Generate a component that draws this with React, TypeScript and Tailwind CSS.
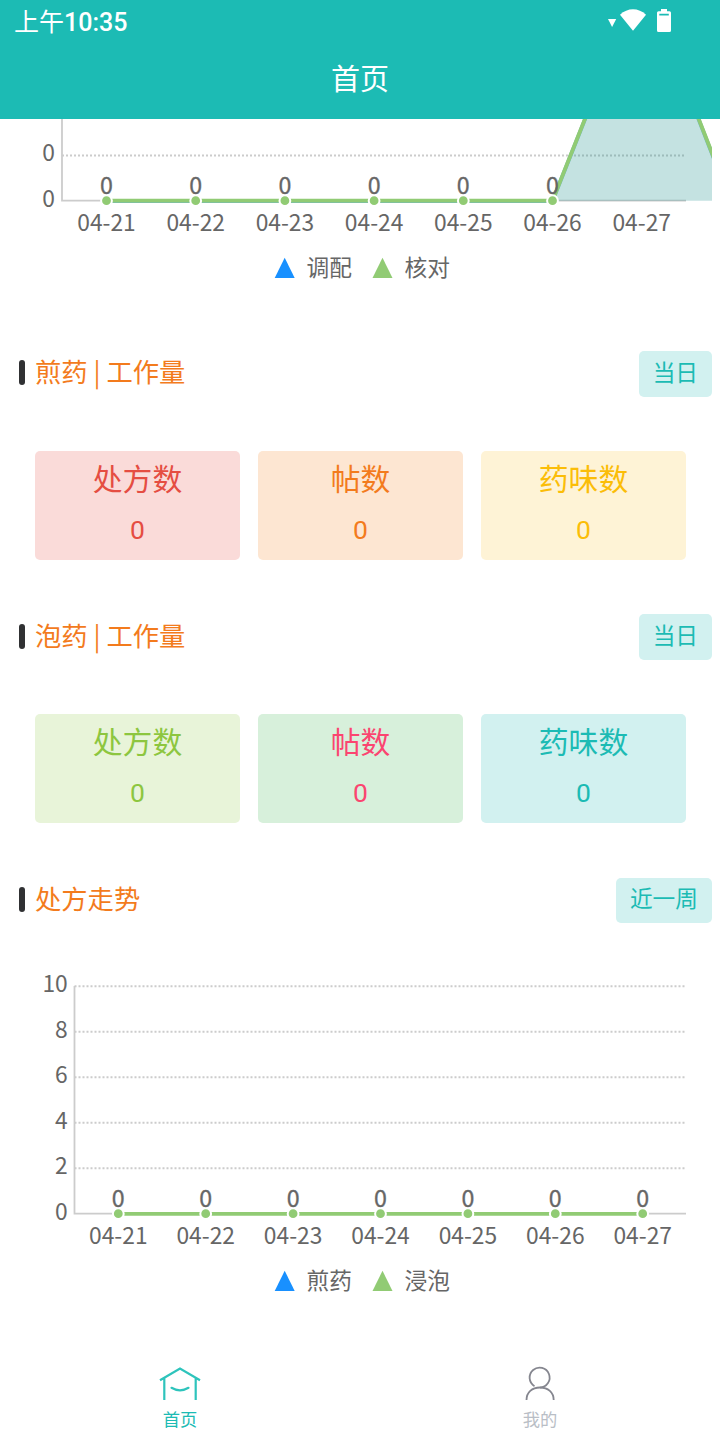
import React from 'react';

const days = ['04-21', '04-22', '04-23', '04-24', '04-25', '04-26', '04-27'];

function StatusBar() {
  return (
    <div className="flex h-[40px] items-center justify-between pl-[14px] pr-[49px] text-white">
      <div className="flex items-baseline pt-[2px] text-[25px] leading-[38px]">
        <span>上午</span>
        <span className="font-['Roboto'] text-[25px] font-medium">10:35</span>
      </div>
      <svg width="64" height="26" viewBox="607 7 64 26" fill="#fff">
        <path d="M608 19h8.200l-4.100 8z" />
        <path d="M620 14.800C627.500 7.400 638.500 7.400 646 14.800L633 30.800z" />
        <path
          fillRule="evenodd"
          d="M661 9h6v2.300h2.500a1.500 1.500 0 0 1 1.500 1.500V30.500a1.500 1.500 0 0 1-1.500 1.500h-11a1.500 1.500 0 0 1-1.500-1.500V12.800a1.500 1.500 0 0 1 1.500-1.500H661zM659.300 13.700v1.900h9.500v-1.900z"
        />
      </svg>
    </div>
  );
}

interface SectionHeaderProps {
  title: string;
  action: string;
  size?: string;
  titleSpacing?: string;
}

function SectionHeader({ title, action, size = 'h-[46px]', titleSpacing = 'pt-0' }: SectionHeaderProps) {
  return (
    <div className={`flex shrink-0 items-start justify-between pl-[19px] pr-[8px] ${size}`}>
      <div className={`flex items-start ${titleSpacing}`}>
        <span className="mt-[9px] h-[25px] w-[6px] rounded-[3px] bg-[#303133]" />
        <h2 className="ml-[10px] text-[26.3px] leading-[40px] whitespace-pre text-[#f37b1d]">{title}</h2>
      </div>
      <button className="h-full rounded-[5px] bg-[#d2f1f0] px-[14px] pb-[5px] text-[22.7px] leading-[40px] text-[#1cbbb4]">
        {action}
      </button>
    </div>
  );
}

function Card({ label, color }: { label: string; color: string }) {
  return (
    <div className={`flex h-[109px] flex-1 flex-col items-center rounded-[5px] ${color}`}>
      <span className="mt-[4px] text-[29.8px] leading-[44px]">{label}</span>
      <span className="mt-[11px] font-['Roboto'] text-[26.5px] leading-[40px]">0</span>
    </div>
  );
}

function Legend({ y, names }: { y: number; names: string[] }) {
  return (
    <g fill="#666" fontSize="22.7">
      <path d={`M274.700 ${y + 10}L284.700 ${y - 10.300}L294.700 ${y + 10}z`} fill="#1890ff" />
      <text x="306.500" y={y + 7.800}>{names[0]}</text>
      <path d={`M372.500 ${y + 10}L382.500 ${y - 10.300}L392.500 ${y + 10}z`} fill="#91cb74" />
      <text x="404.500" y={y + 7.800}>{names[1]}</text>
    </g>
  );
}

function Points({ xs, y }: { xs: number[]; y: number }) {
  return (
    <g>
      {xs.map((x) => (
        <g key={x}>
          <circle cx={x} cy={y} r="5.400" fill="#91cb74" stroke="#fff" strokeWidth="2" />
          <text x={x} y={y - 6.500} textAnchor="middle" fontSize="23.2" fill="#666" stroke="#666" strokeWidth="0.3">
            0
          </text>
        </g>
      ))}
    </g>
  );
}

function DayLabels({ start, step, y }: { start: number; step: number; y: number }) {
  return (
    <g fill="#666" fontSize="22.8" textAnchor="middle">
      {days.map((day, i) => (
        <text key={day} x={start + step * i} y={y}>{day}</text>
      ))}
    </g>
  );
}

function DispenseChart() {
  const xs = [0, 1, 2, 3, 4, 5].map((i) => 106.5 + 89.2 * i);
  return (
    <svg className="block shrink-0" width="712" height="232" viewBox="0 119 712 232">
      <path d="M62 155.500H686" stroke="#ccc" strokeWidth="2" strokeDasharray="2 2" />
      <path d="M62 119V200.700H686" fill="none" stroke="#ccc" strokeWidth="1.800" />
      <g fill="#666" fontSize="22.8" textAnchor="end">
        <text x="54.800" y="161">0</text>
        <text x="54.800" y="207">0</text>
      </g>
      <path d="M552.500 200.700L585 119H698.500L712 155V200.700z" fill="#1b8f8c" fillOpacity="0.26" />
      <path d="M106.500 201H552.500L589.500 108M694.200 108L714.400 160" fill="none" stroke="#6fb7c4" strokeWidth="3.800" />
      <path d="M106.500 200.600H552.500L589.300 108M694.500 108L714.700 160" fill="none" stroke="#91cb74" strokeWidth="3.800" />
      <Points xs={xs} y={200.7} />
      <DayLabels start={106.5} step={89.2} y={231} />
      <Legend y={268} names={['调配', '核对']} />
    </svg>
  );
}

function TrendChart() {
  const xs = days.map((_, i) => 118.3 + 87.4 * i);
  return (
    <svg className="block shrink-0" width="712" height="426" viewBox="0 923 712 426">
      {[10, 8, 6, 4, 2, 0].map((value, i) => (
        <g key={value}>
          {value > 0 && (
            <path d={`M74.500 ${986.300 + 45.500 * i}H686`} stroke="#ccc" strokeWidth="1.900" strokeDasharray="2 2" />
          )}
          <text x="67.700" y={992 + 45.600 * i} textAnchor="end" fill="#666" fontSize="22.8">{value}</text>
        </g>
      ))}
      <path d="M74.500 986V1213.700H686" fill="none" stroke="#ccc" strokeWidth="1.800" />
      <path d="M118.300 1213.800H642.700" stroke="#91cb74" strokeWidth="3.800" />
      <Points xs={xs} y={1213.7} />
      <DayLabels start={118.3} step={87.4} y={1244} />
      <Legend y={1281} names={['煎药', '浸泡']} />
    </svg>
  );
}

function TabBar() {
  return (
    <nav className="flex h-[91px] shrink-0 bg-white text-[17.3px] leading-[24px]">
      <div className="flex flex-1 flex-col items-center pt-[15px] text-[#1cbbb4]">
        <svg width="44" height="40" viewBox="158 1364 44 40" fill="none" stroke="#2ec4bc" strokeWidth="2.200">
          <path d="M160 1380.200L180 1368.500L200 1380.200M164.300 1378V1400M195.700 1378V1400" />
          <path d="M171.500 1387.800C177 1391.100 183 1391.100 188.500 1387.800" strokeLinecap="round" />
        </svg>
        <span className="mt-[3px]">首页</span>
      </div>
      <div className="flex flex-1 flex-col items-center pt-[15px] text-[#b9bec6]">
        <svg width="44" height="40" viewBox="518 1364 44 40" fill="none" stroke="#85868f" strokeWidth="1.800">
          <path d="M534.500 1386.200A10 10 0 1 1 540 1387.600" />
          <path d="M526.500 1400C526.500 1392.500 532 1387.500 540 1387.500S553.700 1392.500 553.700 1400" />
        </svg>
        <span className="mt-[3px]">我的</span>
      </div>
    </nav>
  );
}

export default function App() {
  return (
    <div className="flex h-[1440px] w-[720px] flex-col overflow-hidden bg-white font-['Noto_Sans_CJK_SC',sans-serif]">
      <header className="h-[119px] shrink-0 bg-[#1cbbb4]">
        <StatusBar />
        <h1 className="text-center text-[29px] leading-[74px] text-white">首页</h1>
      </header>
      <main className="flex flex-1 flex-col">
        <DispenseChart />
        <SectionHeader title="煎药 | 工作量" action="当日" />
        <div className="mt-[54px] flex gap-[18px] pl-[35px] pr-[34px]">
          <Card label="处方数" color="bg-[#fadbd9] text-[#e54d42]" />
          <Card label="帖数" color="bg-[#fde6d2] text-[#f37b1d]" />
          <Card label="药味数" color="bg-[#fef3d6] text-[#fbbd08]" />
        </div>
        <div className="h-[54px]" />
        <SectionHeader title="泡药 | 工作量" action="当日" titleSpacing="pt-px" />
        <div className="mt-[54px] flex gap-[18px] pl-[35px] pr-[34px]">
          <Card label="处方数" color="bg-[#e8f4d9] text-[#8dc63f]" />
          <Card label="帖数" color="bg-[#d7f0db] text-[#fb4570]" />
          <Card label="药味数" color="bg-[#d2f1f0] text-[#1cbbb4]" />
        </div>
        <div className="h-[55px]" />
        <SectionHeader title="处方走势" action="近一周" size="h-[45px]" />
        <TrendChart />
      </main>
      <TabBar />
    </div>
  );
}
